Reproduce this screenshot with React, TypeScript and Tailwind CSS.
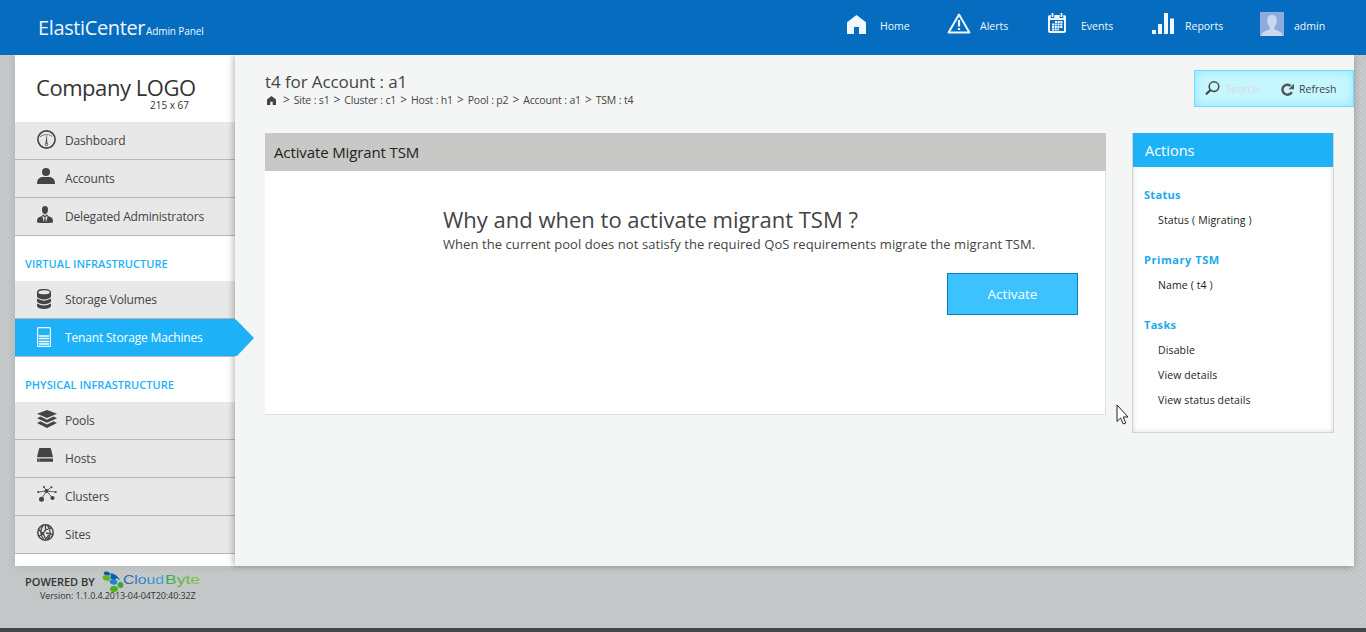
import type { ReactNode } from 'react';

const HomeIcon = ({ className }: { className?: string }) => (
  <svg className={className} viewBox="0 0 19 19" fill="currentColor">
    <path d="M9.500 0L19 7.200V19H12V12H7V19H0V7.200Z" />
  </svg>
);

const AlertIcon = () => (
  <svg className="h-[21px] w-6" viewBox="0 0 24 21" fill="none" stroke="currentColor">
    <path d="M12 1.600L22.400 19.500H1.600Z" strokeWidth="2" strokeLinejoin="round" />
    <path d="M12 7V13.500M12 15V17" strokeWidth="2.200" />
  </svg>
);

const CalendarIcon = () => (
  <svg className="h-5 w-[18px]" viewBox="0 0 18 20">
    <rect x="0" y="2" width="18" height="18" rx="2" fill="currentColor" />
    <rect x="2" y="7" width="14" height="11" fill="#056cc0" />
    <path d="M4.500 0V5M13.500 0V5" stroke="#056cc0" strokeWidth="3.500" />
    <path d="M4.500 0V4M13.500 0V4" stroke="currentColor" strokeWidth="1.800" />
    <g stroke="currentColor" strokeWidth="1.900" strokeDasharray="2.100 0.600">
      <path d="M7 9H15M4 11.500H15M4 14H15M4 16.500H11" />
    </g>
  </svg>
);

const ReportsIcon = () => (
  <svg className="h-[21px] w-[22px]" viewBox="0 0 22 21" fill="currentColor">
    <path d="M0 17H4V21H0ZM6 11H10V21H6ZM12 0H16V21H12ZM18 5.500H22V21H18Z" />
  </svg>
);

const Avatar = () => (
  <svg className="size-6" viewBox="0 0 24 24">
    <rect width="24" height="24" fill="#8fabde" />
    <path
      d="M12 3C8.300 3 7 5.500 7.200 9C7.400 11.700 8.600 13.800 9.700 15V17.500C6 19 2 19.500 1 24H23C22 19.500 18 19 14.300 17.500V15C15.400 13.800 16.600 11.700 16.800 9C17 5.500 15.700 3 12 3Z"
      fill="#cbd8ef"
    />
  </svg>
);

const DashboardIcon = () => (
  <svg className="size-[19px]" viewBox="0 0 19 19" fill="none" stroke="#444">
    <circle cx="9.500" cy="9.500" r="8.600" strokeWidth="1.600" />
    <path d="M3.300 6.600Q9.500 2.600 15.700 6.600" strokeWidth="1" strokeDasharray="1.500 0.700" />
    <path d="M9.500 5.500L8.700 14H10.300Z" fill="#444" strokeWidth="0.300" />
    <circle cx="9.500" cy="14.500" r="1.200" fill="#e8e8e8" strokeWidth="0.900" />
  </svg>
);

const AccountIcon = () => (
  <svg className="h-4 w-[18px]" viewBox="0 0 18 16" fill="#444">
    <circle cx="9" cy="4" r="4" />
    <path d="M0 16C0 11 2.500 9 6 9H12C15.500 9 18 11 18 16Z" />
  </svg>
);

const AdminIcon = () => (
  <svg className="h-[17px] w-4" viewBox="0 0 16 17" fill="#444">
    <path d="M8 0C5.800 0 4.900 1.600 5 4C5.100 6.300 6.300 8.200 8 8.200S10.900 6.300 11 4C11.100 1.600 10.200 0 8 0Z" />
    <path d="M6 8.300L5 10L1.500 11.500C0.300 12.300 0 14 0 16.500Q8 17.500 16 16.500C16 14 15.700 12.300 14.500 11.500L11 10L10 8.300L8 10Z" />
    <path d="M5.300 10L7 16.500L7.600 11ZM10.700 10L9 16.500L8.400 11Z" fill="#e8e8e8" />
  </svg>
);

const VolumesIcon = () => (
  <svg className="h-5 w-[14px]" viewBox="0 0 14 20" fill="#444">
    <path d="M0 14.500Q7 18.500 14 14.500V17.300Q12.500 20 7 20T0 17.300Z" />
    <path d="M0 9.500Q7 13.800 14 9.500V12.500Q12 15.300 7 15.300T0 12.500Z" />
    <path d="M0 3.200V7.500Q2 10.500 7 10.500T14 7.500V3.200Z" />
    <ellipse cx="7" cy="3.300" rx="6.400" ry="2.700" fill="#e8e8e8" stroke="#444" strokeWidth="1.300" />
  </svg>
);

const TenantIcon = () => (
  <svg className="h-5 w-[14px]" viewBox="0 0 14 20" fill="none" stroke="#fff">
    <rect x="0.600" y="0.600" width="12.800" height="18.800" rx="1" strokeWidth="1.200" />
    <path d="M2 9H12M2 11.500H12M2 14.500H12M2 17H12" strokeWidth="1.700" />
  </svg>
);

const PoolsIcon = () => (
  <svg className="h-[18px] w-5" viewBox="0 0 20 18" fill="#444">
    <path d="M10 0L20 3.800L10 8L0 3.800Z" />
    <path d="M3.500 6.500L0 8.300L10 12.800L20 8.300L16.500 6.500L10 9.800Z" />
    <path d="M3.500 11.200L0 13L10 18L20 13L16.500 11.200L10 14.600Z" />
  </svg>
);

const HostsIcon = () => (
  <svg className="h-[14px] w-4" viewBox="0 0 16 14" fill="#444">
    <path d="M3 0H13Q13.800 0 14 0.800L16 9.200H0L2 0.800Q2.200 0 3 0Z" />
    <rect y="10.400" width="16" height="3.400" rx="0.500" />
    <path d="M1.500 12H3" stroke="#bbb" strokeWidth="0.800" />
  </svg>
);

const ClustersIcon = () => (
  <svg className="h-4 w-5" viewBox="0 0 20 16" fill="#444" stroke="#444">
    <path d="M9.500 5L4.500 13M9.500 5L15.500 12M9.500 5L1 6M9.500 5L18.500 6M9.500 5L7 0.800M9.500 5L14.500 1" strokeWidth="0.800" />
    <g stroke="none">
      <circle cx="9.500" cy="5" r="2" />
      <circle cx="4.500" cy="13.300" r="2.500" />
      <circle cx="15.500" cy="12" r="2.100" />
      <circle cx="1.200" cy="6" r="1.100" />
      <circle cx="18.700" cy="6" r="1.100" />
      <circle cx="7" cy="1" r="1" />
      <circle cx="14.500" cy="1.200" r="1" />
    </g>
  </svg>
);

const SitesIcon = () => (
  <svg className="size-[17px]" viewBox="0 0 17 17" fill="none" stroke="#444">
    <circle cx="8.500" cy="8.500" r="7.700" strokeWidth="1.500" />
    <path d="M6 1.500C3 5.500 3.500 11 6.500 15.500M10.500 1.500C14 5 14 12 10.500 15.500M8.500 1V6L6 9.500L9 15.500M1.500 5.500L6 9.500L2 12M8.500 6L14.500 4M9 9L15.500 10.500M9 15L13.500 8" strokeWidth="1.300" />
  </svg>
);

const SearchIcon = () => (
  <svg className="h-[14px] w-[15px]" viewBox="0 0 15 14" fill="none" stroke="#444">
    <circle cx="9" cy="5.600" r="4.800" strokeWidth="1.500" />
    <path d="M5.600 9L1 13.300" strokeWidth="2.200" />
  </svg>
);

const RefreshIcon = () => (
  <svg className="size-[13px]" viewBox="0 0 13 13" fill="none" stroke="#555">
    <path d="M10.800 9.200A5 5 0 1 1 9.800 2.900" strokeWidth="2.500" />
    <path d="M13 0.800V6.300H7.600Z" fill="#555" stroke="none" />
  </svg>
);

const CloudByteLogo = () => (
  <svg className="h-[22px] w-[100px] overflow-visible" viewBox="0 0 100 22">
    <defs>
      <linearGradient id="cloud" x1="0" x2="1">
        <stop offset="0" stopColor="#2a62ae" />
        <stop offset="1" stopColor="#3ba6dc" />
      </linearGradient>
      <linearGradient id="byte" x1="0" x2="1">
        <stop offset="0" stopColor="#2fa84f" />
        <stop offset="1" stopColor="#8cc63f" />
      </linearGradient>
    </defs>
    <ellipse cx="5" cy="2.500" rx="3.200" ry="1.900" fill="#0b56a4" transform="rotate(15 5 2.500)" />
    <path d="M9 2Q15 3 18.500 10Q13 5 8 4.500Z" fill="#1464b4" />
    <ellipse cx="4.500" cy="7" rx="3.900" ry="2.700" fill="#62b51c" transform="rotate(15 4.500 7)" />
    <ellipse cx="11.500" cy="6.500" rx="3.200" ry="2.200" fill="#0b60b4" transform="rotate(20 11.500 6.500)" />
    <ellipse cx="11.500" cy="11" rx="3.900" ry="2.600" fill="#1787d2" transform="rotate(10 11.500 11)" />
    <ellipse cx="18.500" cy="14" rx="2.800" ry="3" fill="#3fa535" />
    <ellipse cx="12" cy="18" rx="4" ry="2.900" fill="#4fae22" />
    <text x="21" y="13" fontSize="12.500" fontFamily="Liberation Sans, sans-serif" fill="url(#cloud)" textLength="41" lengthAdjust="spacingAndGlyphs">Cloud</text>
    <text x="63" y="13" fontSize="12.500" fontFamily="Liberation Sans, sans-serif" fill="url(#byte)" textLength="35" lengthAdjust="spacingAndGlyphs">Byte</text>
  </svg>
);

function NavItem({ icon, children, active }: { icon: ReactNode; children: ReactNode; active?: boolean }) {
  return (
    <li
      className={
        active
          ? 'relative flex h-[38px] items-center border-b border-[#b5b7b9] bg-[#1db2f7] pl-[22px] text-white'
          : 'flex h-[38px] items-center border-b border-[#b5b7b9] bg-[#e8e8e8] pl-[22px] text-[#444]'
      }
    >
      <span className="flex w-[28px] items-start self-start pt-[8px]">{icon}</span>
      <span className="text-[12px] tracking-[-0.17px]">{children}</span>
      {active && (
        <svg className="absolute top-0 left-[220px] z-20 h-[38px] w-[19px]" viewBox="0 0 19 38" fill="#1db2f7">
          <path d="M0 0.500H1L19 19L2 37H0Z" />
        </svg>
      )}
    </li>
  );
}

const NavHeading = ({ children }: { children: ReactNode }) => (
  <h3 className="flex h-[45px] items-center pt-[10px] pl-[10px] text-[11px] font-semibold tracking-[0.04px] text-[#1db2f7]">
    {children}
  </h3>
);

function ActionGroup({ title, items, spacing }: { title: string; items: string[]; spacing: string }) {
  return (
    <section className="leading-[25px]">
      <h4 className={`-mt-px mb-px text-[11px] font-bold text-[#1ba9ee] ${spacing}`}>{title}</h4>
      <ul className="pl-[14px] text-[10.5px] tracking-[0.12px] text-[#222]">
        {items.map((item) => (
          <li key={item}>{item}</li>
        ))}
      </ul>
    </section>
  );
}

const crumbs = ['Site : s1', 'Cluster : c1', 'Host : h1', 'Pool : p2', 'Account : a1', 'TSM : t4'];

export default function App() {
  return (
    <div className="relative flex h-[632px] w-[1366px] flex-col overflow-hidden border-b-4 border-[#454647] bg-[repeating-linear-gradient(135deg,#c9cdce_0px,#c9cdce_1.414px,#bec2c3_1.414px,#bec2c3_2.828px)] font-['Open_Sans','Noto_Sans',sans-serif] leading-none">
      <header className="relative z-10 flex h-[55px] shrink-0 items-center bg-[#056cc0] text-[#f2f7fc]">
        <div className="flex w-[808px] items-baseline pl-[38px]">
          <h1 className="text-[20px] tracking-[-0.38px]">ElastiCenter</h1>
          <span className="pl-px text-[10px] tracking-[-0.12px]">Admin Panel</span>
        </div>
        <nav className="flex items-center pb-[2px] pl-[39px] text-[10.5px]">
          <a className="flex w-[100px] items-center gap-[14px]">
            <HomeIcon className="mb-[5px] size-[19px]" />
            Home
          </a>
          <a className="flex w-[100px] items-center gap-[9px]">
            <span className="pb-[6px]"><AlertIcon /></span>
            Alerts
          </a>
          <a className="flex w-[105px] items-center gap-[15px] pl-px">
            <span className="pb-[7px]"><CalendarIcon /></span>
            Events
          </a>
          <a className="flex w-[108px] items-center gap-[11px]">
            <span className="pb-[6px]"><ReportsIcon /></span>
            Reports
          </a>
          <a className="flex items-center gap-[10px]">
            <span className="pb-[5px]"><Avatar /></span>
            admin
          </a>
        </nav>
      </header>

      <div className="ml-[15px] flex h-[511px] w-[1339px] shrink-0 bg-[#f4f6f5] shadow-[0_0_8px_rgba(0,0,0,0.12)]">
        <aside className="w-[220px] shrink-0 bg-white">
          <div className="flex h-[67px] flex-col pt-[21px] pl-[21px] text-[#333]">
            <span className="text-[22px] tracking-[-0.45px]">Company LOGO</span>
            <span className="mt-px pl-[114px] text-[10px] leading-[12px]">215 x 67</span>
          </div>
          <ul>
            <NavItem icon={<DashboardIcon />}>Dashboard</NavItem>
            <NavItem icon={<AccountIcon />}>Accounts</NavItem>
            <NavItem icon={<AdminIcon />}>Delegated Administrators</NavItem>
          </ul>
          <NavHeading>VIRTUAL INFRASTRUCTURE</NavHeading>
          <ul>
            <NavItem icon={<VolumesIcon />}>Storage Volumes</NavItem>
            <NavItem icon={<TenantIcon />} active>Tenant Storage Machines</NavItem>
          </ul>
          <NavHeading>PHYSICAL INFRASTRUCTURE</NavHeading>
          <ul>
            <NavItem icon={<PoolsIcon />}>Pools</NavItem>
            <NavItem icon={<HostsIcon />}>Hosts</NavItem>
            <NavItem icon={<ClustersIcon />}>Clusters</NavItem>
            <NavItem icon={<SitesIcon />}>Sites</NavItem>
          </ul>
        </aside>

        <main className="flex flex-1 flex-col bg-[#f4f6f5] pl-[30px] shadow-[-2px_0_6px_rgba(0,0,0,0.25)]">
          <div className="flex h-[78px] justify-between">
            <div className="pt-[18px] text-[#444]">
              <h2 className="text-[17px] leading-[18px] tracking-[-0.1px]">t4 for Account : a1</h2>
              <div className="flex h-[18px] items-center gap-1 text-[10.5px] tracking-[-0.16px]">
                <HomeIcon className="mx-[2px] mr-[3px] size-[9px]" />
                {crumbs.map((crumb) => (
                  <span key={crumb} className="flex items-center gap-1">
                    <span className="text-[12px]">&gt;</span>
                    <span>{crumb}</span>
                  </span>
                ))}
              </div>
            </div>
            <div className="mt-[15px] flex h-[37px] w-[160px] items-center border border-[#6fdcfb] bg-[#c6f6ff] pt-px pl-[10px] text-[10.5px] shadow-[inset_0_0_10px_#8ee8fd]">
              <span className="pb-[3px]"><SearchIcon /></span>
              <span className="w-[57px] pl-[6px] text-[#d8dcdf]">Search</span>
              <span className="pl-[4px]"><RefreshIcon /></span>
              <span className="pl-[5px] text-[#444]">Refresh</span>
            </div>
          </div>

          <div className="flex items-start gap-[26px]">
            <section className="h-[282px] w-[841px] border-r border-b border-[#dddfdf] bg-white text-[#444]">
              <h3 className="-mr-px flex h-[38px] items-center bg-[#c8c8c6] pl-[9px] text-[15px] tracking-[-0.12px] text-[#222]">
                Activate Migrant TSM
              </h3>
              <div className="flex flex-col pt-[36px] pr-[27px] pl-[178px]">
                <h2 className="text-[22px] leading-[24px]">Why and when to activate migrant TSM ?</h2>
                <p className="mt-px text-[13px] leading-[24px] tracking-[0.07px] whitespace-nowrap">
                  When the current pool does not satisfy the required QoS requirements migrate the migrant TSM.
                </p>
                <button className="mt-[17px] h-[42px] w-[131px] self-end border border-[#0f7fb8] bg-[#3bc2ff] pt-[2px] text-[13.5px] text-white">
                  Activate
                </button>
              </div>
            </section>

            <aside className="h-[300px] w-[202px] border border-t-0 border-[#d2d4d4] bg-white shadow-[inset_0_0_5px_rgba(0,0,0,0.15)]">
              <h3 className="flex h-[34px] items-center bg-[#1db2f7] pt-[2px] pl-[12px] text-[14.5px] text-white">Actions</h3>
              <div className="flex flex-col gap-[15px] pt-[16px] pl-[11px]">
                <ActionGroup title="Status" items={['Status ( Migrating )']} spacing="tracking-[0.3px]" />
                <ActionGroup title="Primary TSM" items={['Name ( t4 )']} spacing="tracking-[0.55px]" />
                <ActionGroup title="Tasks" items={['Disable', 'View details', 'View status details']} spacing="tracking-[0.3px]" />
              </div>
            </aside>
          </div>
        </main>
      </div>

      <footer className="flex flex-col pt-[5px] pl-[25px] text-[#333]">
        <div className="flex h-[20px] items-center gap-[7px]">
          <span className="text-[11px] font-semibold">POWERED BY</span>
          <span className="pt-[2px]"><CloudByteLogo /></span>
        </div>
        <span className="pl-[15px] text-[9px] leading-[10px] tracking-[-0.09px]">Version: 1.1.0.4.2013-04-04T20:40:32Z</span>
      </footer>

      <svg className="absolute top-[404px] left-[1116px] z-30 h-[21px] w-[13px]" viewBox="0 0 13 21">
        <path d="M1 1V17.500L4.600 14L7.300 20L9.800 18.900L7.200 13H12Z" fill="#fff" stroke="#1e1e30" />
      </svg>
    </div>
  );
}
